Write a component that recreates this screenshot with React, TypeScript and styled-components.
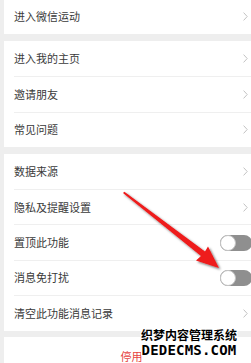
import { FunctionComponent } from "react";
import styled, { createGlobalStyle } from "styled-components";

const GlobalStyle = createGlobalStyle`
    html, body {
        margin: 0;
        padding: 0;
        background-color: #eeeeee;
        font-family: "Noto Sans CJK SC", "Noto Sans", sans-serif;
        -webkit-font-smoothing: antialiased;
    }
`;

const Page = styled.div`
    position: relative;
    width: 251px;
    height: 364px;
    overflow: hidden;
    display: flex;
    flex-direction: column;
    gap: 6.5px;
    padding-left: 4px;
    box-sizing: border-box;
    margin-top: -1px;
`;

const Card = styled.div`
    background-color: #ffffff;
    display: flex;
    flex-direction: column;
    flex-shrink: 0;
`;

const Row = styled.div<{ $first?: boolean }>`
    display: flex;
    align-items: center;
    justify-content: space-between;
    height: 35.4px;
    box-sizing: border-box;
    margin-left: 10px;
    padding-right: 3px;
    border-top: ${({ $first }) => ($first ? "none" : "1px solid #efefef")};
`;

const Label = styled.span`
    font-size: 11px;
    color: #3a3a3a;
    line-height: 1;
`;

const Chevron = styled.svg`
    width: 5px;
    height: 9px;
    flex-shrink: 0;
`;

const Toggle = styled.div`
    position: relative;
    width: 32px;
    height: 16px;
    border-radius: 8px;
    background-color: #8f8f8f;
    margin-right: -4px;
    flex-shrink: 0;
`;

const Knob = styled.div`
    position: absolute;
    left: 0;
    top: 0;
    width: 16px;
    height: 16px;
    box-sizing: border-box;
    border-radius: 50%;
    background-color: #ffffff;
    border: 1px solid #c4c4c4;
`;

const StopRow = styled.div`
    display: flex;
    align-items: center;
    justify-content: center;
    height: 38px;
    padding-left: 8px;
`;

const StopText = styled.span`
    font-size: 11px;
    line-height: 11px;
    color: #e64340;
`;

const ArrowLayer = styled.svg`
    position: absolute;
    left: 0;
    top: 1px;
    width: 251px;
    height: 363px;
    pointer-events: none;
`;

const Watermark = styled.div`
    position: absolute;
    left: 141px;
    top: 329px;
    display: flex;
    flex-direction: column;
    align-items: center;
    gap: 1px;
    color: #000000;
    font-weight: 700;
    text-shadow: 1px 0 0 #fff, -1px 0 0 #fff, 0 1px 0 #fff, 0 -1px 0 #fff,
        1px 1px 0 #fff, -1px -1px 0 #fff, 1px -1px 0 #fff, -1px 1px 0 #fff;
`;

const WatermarkTitle = styled.span`
    font-size: 12px;
    line-height: 14px;
    font-family: "Noto Sans CJK SC", sans-serif;
`;

const WatermarkSite = styled.span`
    font-size: 14px;
    line-height: 15px;
    font-family: "DejaVu Sans Mono", monospace;
    letter-spacing: 0.2px;
`;

const Arrow = () => (
    <Chevron viewBox="0 0 5 9">
        <polyline points="0.6,0.6 4.2,4.5 0.6,8.4" fill="none" stroke="#c2c2c2" strokeWidth="1" />
    </Chevron>
);

interface ItemProps {
    label: string;
    first?: boolean;
    toggle?: boolean;
}

const Item: FunctionComponent<ItemProps> = ({ label, first, toggle }) => (
    <Row $first={first}>
        <Label>{label}</Label>
        {toggle ? (
            <Toggle>
                <Knob />
            </Toggle>
        ) : (
            <Arrow />
        )}
    </Row>
);

const App = () => {
    return (
        <>
            <GlobalStyle />
            <Page>
                <Card>
                    <Item label="进入微信运动" first />
                </Card>
                <Card>
                    <Item label="进入我的主页" first />
                    <Item label="邀请朋友" />
                    <Item label="常见问题" />
                </Card>
                <Card>
                    <Item label="数据来源" first />
                    <Item label="隐私及提醒设置" />
                    <Item label="置顶此功能" toggle />
                    <Item label="消息免打扰" toggle />
                    <Item label="清空此功能消息记录" />
                </Card>
                <Card>
                    <StopRow>
                        <StopText>停用</StopText>
                    </StopRow>
                </Card>
                <ArrowLayer viewBox="0 0 251 363">
                    <defs>
                        <filter id="shadow" x="-20%" y="-20%" width="140%" height="140%">
                            <feDropShadow dx="1.5" dy="1.5" stdDeviation="1.2" floodColor="#000" floodOpacity="0.55" />
                        </filter>
                    </defs>
                    <polygon
                        points="123,193 124.4,191.8 205,251.5 208,246.5 219,268 196,260.5 201,256"
                        fill="#ee1a1a"
                        filter="url(#shadow)"
                    />
                </ArrowLayer>
                <Watermark>
                    <WatermarkTitle>织梦内容管理系统</WatermarkTitle>
                    <WatermarkSite>DEDECMS.COM</WatermarkSite>
                </Watermark>
            </Page>
        </>
    );
};

export default App;
